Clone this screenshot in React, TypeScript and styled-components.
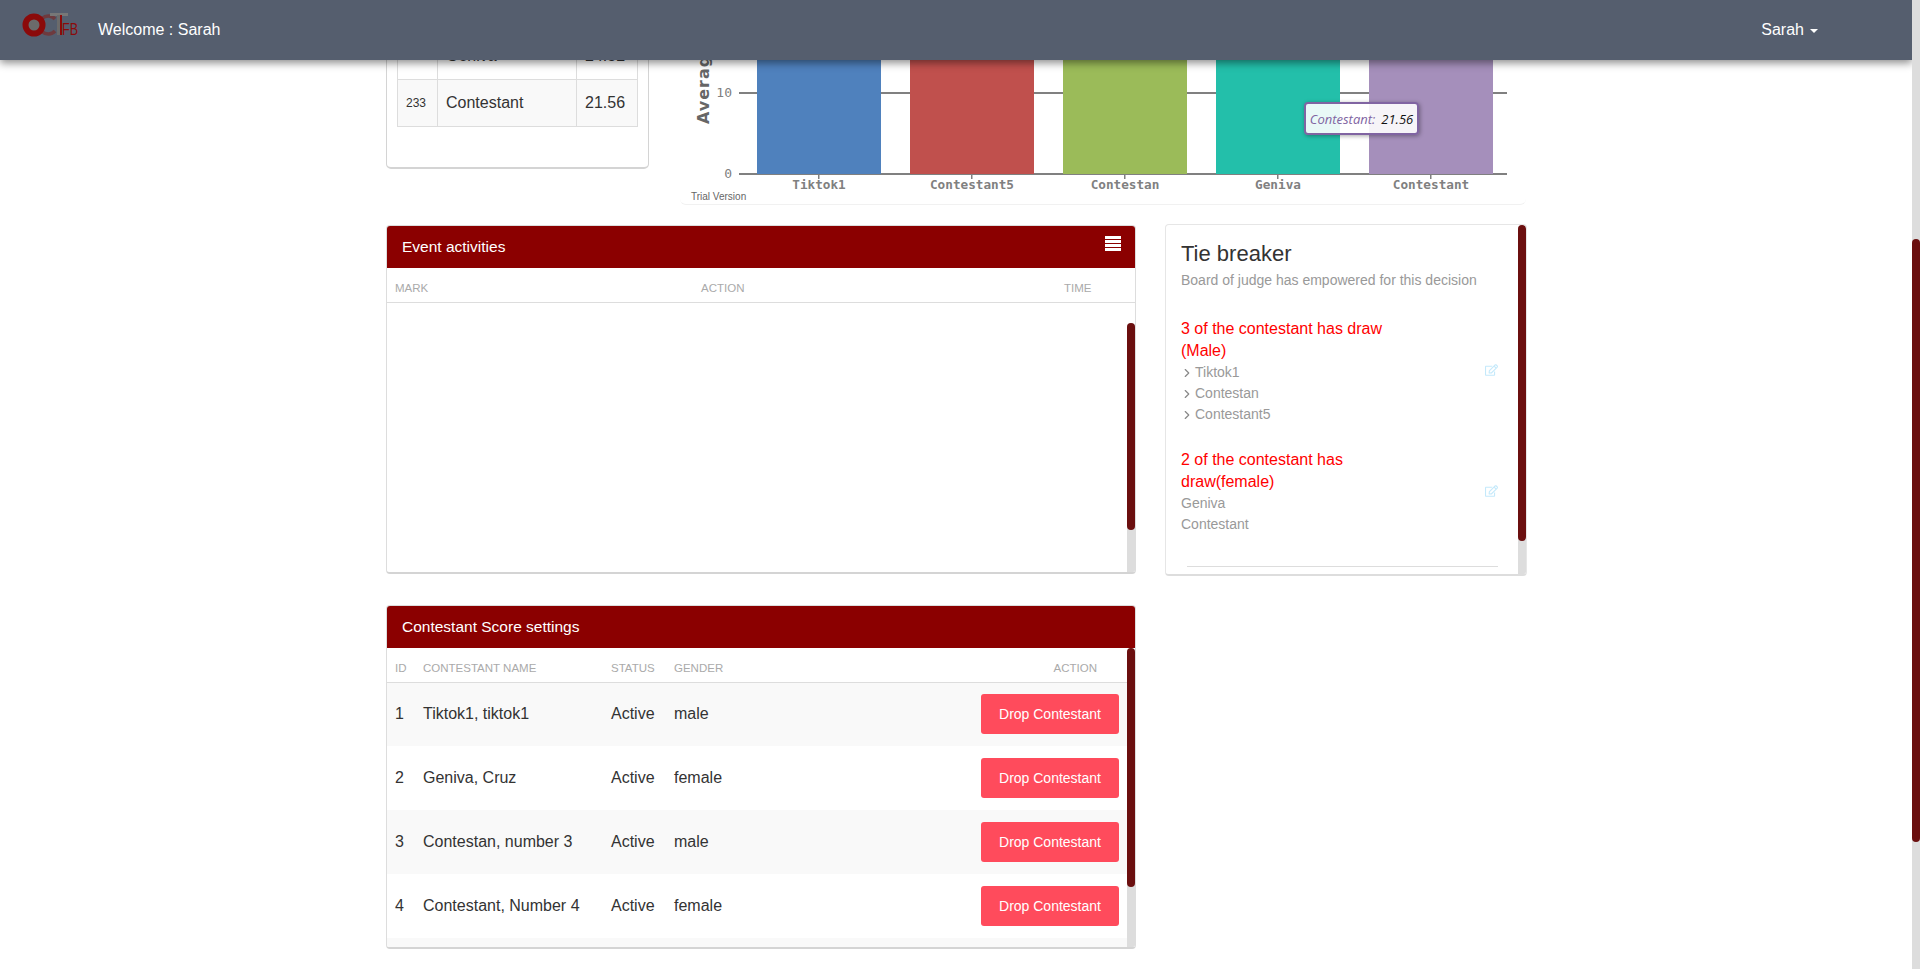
import { useLayoutEffect, useRef } from 'react'
import styled, { createGlobalStyle } from 'styled-components'
import { ChevronRight } from 'lucide-react'
import { FaRegEdit } from 'react-icons/fa'

const GlobalStyle = createGlobalStyle`
  html, body {
    margin: 0;
    height: 100%;
    overflow: hidden;
    background: #fff;
    font-family: "Liberation Sans", Arial, sans-serif;
    color: #333;
  }
  * {
    box-sizing: border-box;
  }
`

const Shell = styled.div`
  position: relative;
  height: 100vh;
`

const Viewport = styled.div`
  height: 100%;
  padding-right: 8px;
  overflow-y: scroll;
  scrollbar-width: none;
`

const PageTrack = styled.div`
  position: absolute;
  top: 0;
  right: 0;
  bottom: 0;
  z-index: 11;
  width: 8px;
  padding-top: 239px;
  background: #ddd;
`

const Navbar = styled.nav`
  position: absolute;
  top: 0;
  left: 0;
  right: 8px;
  z-index: 10;
  height: 60px;
  background: #555e6e;
  box-shadow: 0 3px 8px rgba(0, 0, 0, 0.45);
  display: flex;
  align-items: center;
  padding: 0 94px 0 20px;
  color: #fff;
  font-size: 16px;
`

const LogoMark = styled.svg`
  margin-bottom: 10px;
  overflow: visible;
`

const Welcome = styled.span`
  margin-left: 18px;
  flex: 1;
`

const UserMenu = styled.span`
  display: flex;
  align-items: center;
  gap: 6px;
`

const Caret = styled.i`
  border-top: 4px solid #fff;
  border-left: 4px solid transparent;
  border-right: 4px solid transparent;
  margin-top: 2px;
`

const Container = styled.main`
  width: 1140px;
  margin: 0 auto;
  padding: 89px 0 225px;
`

const TopRow = styled.section`
  display: flex;
  justify-content: space-between;
  align-items: flex-start;
  margin-bottom: 20px;
`

const RankCard = styled.div`
  width: 263px;
  height: 464px;
  display: flex;
  flex-direction: column;
  justify-content: flex-end;
  padding: 0 11px 40px 10px;
  border: 1px solid #d4d4d4;
  border-bottom-width: 2px;
  border-radius: 5px;
`

const RankTable = styled.table`
  width: 240px;
  border-collapse: collapse;
  table-layout: fixed;
  font-size: 16px;
`

const RankRow = styled.tr<{ $striped?: boolean }>`
  height: 47px;
  background: ${(p) => (p.$striped ? '#f9f9f9' : '#fff')};
`

const RankCell = styled.td<{ $small?: boolean; $width: number }>`
  width: ${(p) => p.$width}px;
  border: 1px solid #ddd;
  padding: 0 8px;
  font-size: ${(p) => (p.$small ? '12px' : '16px')};
`

const ChartCard = styled.div`
  position: relative;
  width: 846px;
  height: 500px;
  border-bottom: 1px solid #f1f1f1;
  border-radius: 0 0 6px 6px;
`

const ChartTooltip = styled.div`
  position: absolute;
  left: 624px;
  top: 397px;
  width: 115px;
  height: 33px;
  display: flex;
  align-items: center;
  justify-content: center;
  gap: 6px;
  border: 2px solid #8064a2;
  border-radius: 4px;
  background: rgba(255, 255, 255, 0.9);
  box-shadow: 1px 1px 4px rgba(0, 0, 0, 0.35);
  font-family: "Open Sans", sans-serif;
  font-size: 13px;
  font-style: italic;
  color: #111;
`

const TooltipName = styled.span`
  color: #8064a2;
`

const LowerGrid = styled.section`
  display: grid;
  grid-template-columns: 750px 362px;
  column-gap: 29px;
  align-items: start;
`

const Stack = styled.div`
  display: flex;
  flex-direction: column;
  gap: 31px;
`

const Panel = styled.div<{ $height: number }>`
  position: relative;
  height: ${(p) => p.$height}px;
  overflow: hidden;
  border: 1px solid #ddd;
  border-bottom: 2px solid #d4d4d4;
  border-radius: 4px;
`

const PanelHeader = styled.header`
  height: 42px;
  background: #8b0000;
  color: #fff;
  display: flex;
  align-items: center;
  justify-content: space-between;
  padding: 0 14px 0 15px;
  font-size: 15.5px;
`

const PanelMenuIcon = styled.svg`
  margin-bottom: 7px;
`

const ScrollTrack = styled.div<{ $top: number }>`
  position: absolute;
  top: ${(p) => p.$top}px;
  right: 0;
  bottom: 0;
  width: 8px;
  background: #ddd;
  border-radius: 4px 4px 0 0;
`

const ScrollThumb = styled.div<{ $height: number }>`
  height: ${(p) => p.$height}px;
  background: #6b0f0f;
  border-radius: 4px;
`

const DataTable = styled.table`
  width: 100%;
  border-collapse: collapse;
  table-layout: fixed;
`

const HeadCell = styled.th<{ $width?: number }>`
  width: ${(p) => (p.$width ? `${p.$width}px` : 'auto')};
  height: 34px;
  padding: 7px 8px 0;
  text-align: left;
  font-size: 11.5px;
  font-weight: normal;
  text-transform: uppercase;
  color: #aaa;
  border-bottom: 1px solid #ddd;
`

const ActionHead = styled(HeadCell)`
  text-align: right;
  padding-right: 38px;
`

const ScoreRow = styled.tr<{ $striped: boolean }>`
  height: 64px;
  background: ${(p) => (p.$striped ? '#f9f9f9' : '#fff')};
`

const ScoreCell = styled.td`
  padding: 0 8px;
  font-size: 16px;
  color: #333;
  white-space: nowrap;
`

const ActionCell = styled(ScoreCell)`
  text-align: right;
  padding-right: 16px;
`

const DropButton = styled.button`
  width: 138px;
  height: 40px;
  border: 0;
  border-radius: 3px;
  background: #ff4b5c;
  color: #fff;
  font-family: inherit;
  font-size: 14px;
  vertical-align: middle;
`

const TieCard = styled.aside`
  position: relative;
  height: 352px;
  margin-top: -1px;
  overflow: hidden;
  padding: 14px 28px 0 15px;
  border: 1px solid #e6e6e6;
  border-bottom: 2px solid #ddd;
  border-radius: 4px;
`

const TieTitle = styled.h4`
  margin: 0;
  font-size: 22px;
  font-weight: normal;
  line-height: 30px;
  color: #333;
`

const TieSubtitle = styled.p`
  margin: 1px 0 28px;
  font-size: 14px;
  line-height: 20px;
  color: #999;
`

const DrawGroup = styled.div`
  display: flex;
  align-items: center;
  justify-content: space-between;
  margin-bottom: 25px;
`

const DrawText = styled.div`
  width: 220px;
`

const DrawTitle = styled.div`
  margin-bottom: -1px;
  font-size: 16px;
  line-height: 22px;
  color: #f00;
`

const DrawName = styled.div`
  display: flex;
  align-items: center;
  gap: 1px;
  height: 21px;
  font-size: 14px;
  color: #999;
`

const Chevron = styled(ChevronRight)`
  margin: 2px 0 0 -1px;
  color: #888;
`

const EditIcon = styled(FaRegEdit)`
  width: 13px;
  height: 12px;
  margin-bottom: 2px;
  color: #c4e9fb;
`

const TieRule = styled.hr`
  margin: 32px 0 0 6px;
  border: 0;
  border-top: 1px solid #ddd;
`

const rankRows = [
  { id: 145, name: 'Geniva', score: '24.52' },
  { id: 233, name: 'Contestant', score: '21.56' },
]

const bars = [
  { name: 'Tiktok1', value: 27, color: '#4f81bd', x: 77, width: 124 },
  { name: 'Contestant5', value: 26, color: '#c0504d', x: 230, width: 124 },
  { name: 'Contestan', value: 25, color: '#9bbb59', x: 383, width: 124 },
  { name: 'Geniva', value: 24.52, color: '#23bfaa', x: 536, width: 124 },
  { name: 'Contestant', value: 21.56, color: '#a58fbb', x: 689, width: 124 },
]

const contestants = [
  { id: 1, name: 'Tiktok1, tiktok1', gender: 'male' },
  { id: 2, name: 'Geniva, Cruz', gender: 'female' },
  { id: 3, name: 'Contestan, number 3', gender: 'male' },
  { id: 4, name: 'Contestant, Number 4', gender: 'female' },
  { id: 5, name: 'Contestant5, number 5', gender: 'male' },
]

const BASELINE = 469
const UNIT = 8.1

function Logo() {
  return (
    <LogoMark width="60" height="34" viewBox="0 0 60 34" aria-label="OCTFB">
      <path d="M35 11 A 9 9 0 1 0 35 23" fill="none" stroke="#6e3a3e" strokeWidth="3.5" />
      <circle cx="14" cy="17" r="8.5" fill="#6b6b6b" stroke="#8b0a0a" strokeWidth="6" />
      <rect x="30" y="5" width="18" height="3" fill="#777" />
      <rect x="37" y="7" width="3" height="20" fill="#6b6b6b" />
      <rect x="40" y="7" width="2" height="20" fill="#8b0a0a" />
      <text
        x="42"
        y="27"
        fontFamily="Liberation Sans, sans-serif"
        fontSize="17"
        textLength="16"
        lengthAdjust="spacingAndGlyphs"
        fill="#8b0a0a"
      >
        FB
      </text>
    </LogoMark>
  )
}

function ListIcon() {
  return (
    <PanelMenuIcon width="16" height="15" viewBox="0 0 16 15">
      <rect y="0" width="16" height="3" fill="#fff" />
      <rect y="4" width="16" height="3" fill="#fff" />
      <rect y="8" width="16" height="3" fill="#fff" />
      <rect y="12" width="16" height="3" fill="#fff" />
    </PanelMenuIcon>
  )
}

function ScoreChart() {
  const ticks = [0, 10, 20, 30]
  return (
    <svg width="846" height="500" viewBox="0 0 846 500">
      {ticks.map((tick) => (
        <g key={tick}>
          <rect x="59" y={BASELINE - tick * UNIT - 1} width="768" height="2" fill="#808080" />
          <text
            x="52"
            y={BASELINE - tick * UNIT + 4}
            textAnchor="end"
            fontFamily="DejaVu Sans Mono, monospace"
            fontSize="13"
            fill="#808080"
          >
            {tick}
          </text>
        </g>
      ))}
      <text
        transform={`translate(29 ${BASELINE - 50}) rotate(-90)`}
        fontFamily="DejaVu Sans, sans-serif"
        fontSize="16"
        fontWeight="bold"
        letterSpacing="1"
        fill="#666"
      >
        Average Score
      </text>
      {bars.map((bar) => (
        <g key={bar.name}>
          <rect
            x={bar.x}
            y={BASELINE - bar.value * UNIT}
            width={bar.width}
            height={bar.value * UNIT}
            fill={bar.color}
          />
          <rect x={bar.x + bar.width / 2 - 1} y={BASELINE} width="1.5" height="5" fill="#808080" />
          <text
            x={bar.x + bar.width / 2}
            y={BASELINE + 15}
            textAnchor="middle"
            fontFamily="DejaVu Sans Mono, monospace"
            fontSize="12.7"
            fontWeight="bold"
            fill="#808080"
          >
            {bar.name}
          </text>
        </g>
      ))}
      <text x="11" y="495" fontFamily="Liberation Sans, sans-serif" fontSize="10" fill="#666">
        Trial Version
      </text>
    </svg>
  )
}

export default function App() {
  const viewportRef = useRef<HTMLDivElement>(null)

  useLayoutEffect(() => {
    if (viewportRef.current) {
      viewportRef.current.scrollTop = 384
    }
  }, [])

  return (
    <Shell>
      <GlobalStyle />
      <Navbar>
        <Logo />
        <Welcome>Welcome : Sarah</Welcome>
        <UserMenu>
          Sarah <Caret />
        </UserMenu>
      </Navbar>
      <PageTrack>
        <ScrollThumb $height={603} />
      </PageTrack>
      <Viewport ref={viewportRef}>
        <Container>
          <TopRow>
            <RankCard>
              <RankTable>
                <tbody>
                  {rankRows.map((row, index) => (
                    <RankRow key={row.id} $striped={index % 2 === 1}>
                      <RankCell $small $width={40}>
                        {row.id}
                      </RankCell>
                      <RankCell $width={139}>{row.name}</RankCell>
                      <RankCell $width={61}>{row.score}</RankCell>
                    </RankRow>
                  ))}
                </tbody>
              </RankTable>
            </RankCard>
            <ChartCard>
              <ScoreChart />
              <ChartTooltip>
                <TooltipName>Contestant:</TooltipName> 21.56
              </ChartTooltip>
            </ChartCard>
          </TopRow>
          <LowerGrid>
            <Stack>
              <Panel $height={349}>
                <PanelHeader>
                  Event activities
                  <ListIcon />
                </PanelHeader>
                <DataTable>
                  <thead>
                    <tr>
                      <HeadCell $width={306}>Mark</HeadCell>
                      <HeadCell $width={363}>Action</HeadCell>
                      <HeadCell>Time</HeadCell>
                    </tr>
                  </thead>
                </DataTable>
                <ScrollTrack $top={97}>
                  <ScrollThumb $height={207} />
                </ScrollTrack>
              </Panel>
              <Panel $height={344}>
                <PanelHeader>Contestant Score settings</PanelHeader>
                <DataTable>
                  <thead>
                    <tr>
                      <HeadCell $width={28}>ID</HeadCell>
                      <HeadCell $width={188}>Contestant Name</HeadCell>
                      <HeadCell $width={63}>Status</HeadCell>
                      <HeadCell $width={170}>Gender</HeadCell>
                      <ActionHead>Action</ActionHead>
                    </tr>
                  </thead>
                  <tbody>
                    {contestants.map((contestant, index) => (
                      <ScoreRow key={contestant.id} $striped={index % 2 === 0}>
                        <ScoreCell>{contestant.id}</ScoreCell>
                        <ScoreCell>{contestant.name}</ScoreCell>
                        <ScoreCell>Active</ScoreCell>
                        <ScoreCell>{contestant.gender}</ScoreCell>
                        <ActionCell>
                          <DropButton>Drop Contestant</DropButton>
                        </ActionCell>
                      </ScoreRow>
                    ))}
                  </tbody>
                </DataTable>
                <ScrollTrack $top={42}>
                  <ScrollThumb $height={239} />
                </ScrollTrack>
              </Panel>
            </Stack>
            <TieCard>
              <TieTitle>Tie breaker</TieTitle>
              <TieSubtitle>Board of judge has empowered for this decision</TieSubtitle>
              <DrawGroup>
                <DrawText>
                  <DrawTitle>3 of the contestant has draw (Male)</DrawTitle>
                  {['Tiktok1', 'Contestan', 'Contestant5'].map((name) => (
                    <DrawName key={name}>
                      <Chevron size={14} strokeWidth={2} />
                      {name}
                    </DrawName>
                  ))}
                </DrawText>
                <EditIcon />
              </DrawGroup>
              <DrawGroup>
                <DrawText>
                  <DrawTitle>2 of the contestant has draw(female)</DrawTitle>
                  <DrawName>Geniva</DrawName>
                  <DrawName>Contestant</DrawName>
                </DrawText>
                <EditIcon />
              </DrawGroup>
              <TieRule />
              <ScrollTrack $top={0}>
                <ScrollThumb $height={316} />
              </ScrollTrack>
            </TieCard>
          </LowerGrid>
        </Container>
      </Viewport>
    </Shell>
  )
}
